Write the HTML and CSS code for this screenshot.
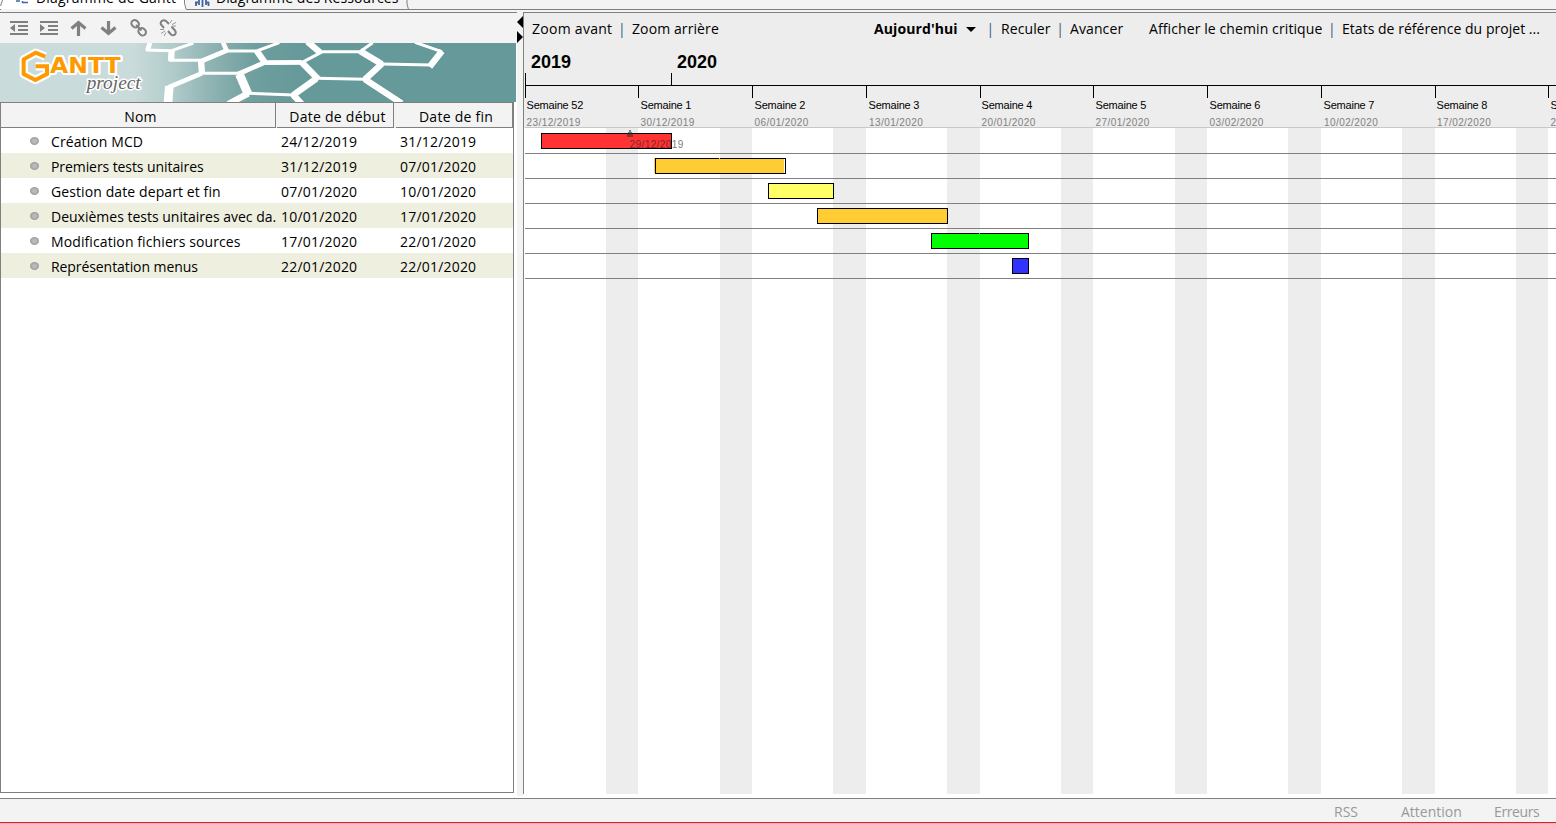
FILE: index.html
```html
<!DOCTYPE html>
<html lang="fr">
<head>
<meta charset="utf-8">
<title>GanttProject</title>
<link rel="stylesheet" href="styles.css">
</head>
<body>
<div class="app">
  <header class="tabs">
    <svg class="tab-lines" width="420" height="10" viewBox="0 0 420 10"><path d="M0 9.5H186L184.500 3V0M407 0V4L408.500 9.500" fill="none" stroke="#808080"/><path d="M1 9.500H186" stroke="#f3f3f3"/><path d="M.5 6L2.500 0" stroke="#808080"/><path d="M16 1H20M22 2.500H28M22.500 1V3" stroke="#4267a8" stroke-width="1.500"/><path d="M196 2V6M199 0V5M202.500 0V7M206 0V5M208.500 2V6M195 2.500H198M207 2.500H209" stroke="#4262a0" stroke-width="1.800"/></svg>
    <span class="tab tab-gantt">Diagramme de Gantt</span><span class="tab tab-res">Diagramme des Ressources</span>
  </header>
  <main class="main">
    <section class="left">
      <div class="tools">
        <svg viewBox="0 0 20 20"><path d="M1 4H19M9 8H19M9 12H19M1 16H19" stroke="#808080" stroke-width="2"/><path d="M6 6V14L1 10Z" fill="#808080"/></svg>
        <svg viewBox="0 0 20 20"><path d="M1 4H19M9 8H19M9 12H19M1 16H19" stroke="#808080" stroke-width="2"/><path d="M1 6V14L6 10Z" fill="#808080"/></svg>
        <svg viewBox="0 0 20 20"><path d="M2.500 10.500L9.500 4.500L16.500 10.500M9.500 4.500V18" fill="none" stroke="#808080" stroke-width="3.200"/></svg>
        <svg viewBox="0 0 20 20"><path d="M2.500 9.500L9.500 15.500L16.500 9.500M9.500 3V15.500" fill="none" stroke="#808080" stroke-width="3.200"/></svg>
        <svg viewBox="0 0 20 20"><g fill="none" stroke="#808080" stroke-width="2"><rect x="2" y="2.500" width="8" height="6.500" rx="3.200" transform="rotate(42 6 6)"/><rect x="9.200" y="10.500" width="8" height="6.500" rx="3.200" transform="rotate(42 13.200 13.700)"/><path d="M7 7L12.500 12.500"/></g></svg>
        <svg viewBox="0 0 20 20"><g fill="none" stroke="#808080" stroke-width="2"><path d="M5 10L2 6.500Q1 4.500 3 2.800Q5 1.500 7 3L10 6M9 13L12 16.500Q14 18 16 16.500Q17.500 14.500 16 12.500L12.500 8.500"/><path d="M11 5L13 2M13 6.500L17 4.500M13.500 8H17M1 11.500H5M2 15.500L6 13M5 18L7 14.500" stroke-width="1" stroke="#999"/></g></svg>
      </div>
      <svg class="banner" viewBox="0 129 1548 177" preserveAspectRatio="none">
        <defs><linearGradient id="sea" gradientUnits="userSpaceOnUse" x1="400" y1="0" x2="900" y2="0"><stop offset="0" stop-color="#c9dbda"/><stop offset=".24" stop-color="#b0cbca"/><stop offset=".48" stop-color="#8db2b1"/><stop offset=".72" stop-color="#6f9f9f"/><stop offset="1" stop-color="#669999"/></linearGradient></defs>
        <rect y="129" width="1548" height="177" fill="url(#sea)"/>
        <g fill="none" stroke="#fff" stroke-linejoin="bevel">
          <path stroke-width="9" d="M438 150L515 152L580 129M507 181H605L672 153H770L838 128M790 188H905L968 155H1080L1118 128M1145 192L1295 195L1325 155L1245 127M605 220H715L790 188M950 235L1095 238M745 280L880 285"/>
          <path stroke-width="14" d="M442 152L450 128M605 183L680 152L668 125M790 188L905 187M715 222L795 187M605 220L505 262"/>
          <path stroke-width="19" d="M515 150L513 183M603 182L606 222M770 152L796 190M960 157L922 125M905 187L955 238M1080 153L1145 192L1095 238L1205 310M950 235L880 285L905 312M745 280L685 312M1289 200L1326 153"/>
          <path stroke-width="26" d="M718 222L745 284M508 258L504 310"/>
        </g>
        <g stroke-linejoin="round">
          <path d="M136 170L107 158L71 178V222L106 240L141 222V199H107" fill="none" stroke="#fff" stroke-width="25"/>
          <text class="logo-main" x="150" y="220" textLength="212" lengthAdjust="spacingAndGlyphs">ANTT</text>
          <text class="logo-sub" x="260" y="266" textLength="162" lengthAdjust="spacingAndGlyphs">project</text>
          <path d="M136 170L107 158L71 178V222L106 240L141 222V199H107" fill="none" stroke="#ff9900" stroke-width="12" stroke-linejoin="miter"/>
        </g>
      </svg>
      <div class="table">
        <div class="row head"><span>Nom</span><span>Date de début</span><span>Date de fin</span></div>
        <div class="row"><span><i></i>Création MCD</span><span>24/12/2019</span><span>31/12/2019</span></div>
        <div class="row tight"><span><i></i>Premiers tests unitaires</span><span>31/12/2019</span><span>07/01/2020</span></div>
        <div class="row"><span><i></i>Gestion date depart et fin</span><span>07/01/2020</span><span>10/01/2020</span></div>
        <div class="row long"><span><i></i>Deuxièmes tests unitaires avec da.</span><span>10/01/2020</span><span>17/01/2020</span></div>
        <div class="row"><span><i></i>Modification fichiers sources</span><span>17/01/2020</span><span>22/01/2020</span></div>
        <div class="row tight"><span><i></i>Représentation menus</span><span>22/01/2020</span><span>22/01/2020</span></div>
      </div>
    </section>
    <div class="divider"><svg width="6" height="32" viewBox="0 0 6 32"><path d="M6 4V16L0 10ZM0 19V31L6 25Z"/></svg></div>
    <section class="right">
      <nav class="actions">
        <span class="w100">Zoom avant<b>|</b></span><span class="w242">Zoom arrière</span>
        <strong>Aujourd'hui</strong><svg width="10" height="5" viewBox="0 0 10 5"><path d="M0 0H10L5 5Z"/></svg>
        <b class="sep1">|</b><span class="w69">Reculer<b>|</b></span><span class="w79">Avancer</span><span class="w193">Afficher le chemin critique<b>|</b></span><span class="states">Etats de référence du projet ...</span>
      </nav>
      <svg class="chart" width="1032" height="751" viewBox="524 43 1032 751">
        <rect x="524" y="128" width="1032" height="666" fill="#fff"/>
        <g fill="#ededed"><path d="M606 128h32v666h-32zM720 128h32v666h-32zM833 128h33v666h-33zM947 128h33v666h-33zM1061 128h32v666h-32zM1175 128h32v666h-32zM1288 128h33v666h-33zM1402 128h33v666h-33zM1516 128h32v666h-32z"/></g>
        <path d="M525 127.500H1556" stroke="#c8c8c8"/>
        <path d="M525 153.500H1556M525 178.500H1556M525 203.500H1556M525 228.500H1556M525 253.500H1556M525 278.500H1556" stroke="#808080"/>
        <path d="M525 85.500H1556M525.500 73V98M671.500 73V85M638.500 85V98M752.500 85V98M866.500 85V98M980.500 85V98M1093.500 85V98M1207.500 85V98M1321.500 85V98M1435.500 85V98M1548.500 85V98" stroke="#000"/>
        <g class="year"><text x="531" y="68">2019</text><text x="677" y="68">2020</text></g>
        <g class="week"><text x="526.500" y="109">Semaine 52</text><text x="640.500" y="109">Semaine 1</text><text x="754.500" y="109">Semaine 2</text><text x="868.500" y="109">Semaine 3</text><text x="981.500" y="109">Semaine 4</text><text x="1095.500" y="109">Semaine 5</text><text x="1209.500" y="109">Semaine 6</text><text x="1323.500" y="109">Semaine 7</text><text x="1436.500" y="109">Semaine 8</text><text x="1550.500" y="109">Semaine 9</text></g>
        <g class="day"><text x="526.500" y="126">23/12/2019</text><text x="640.500" y="126">30/12/2019</text><text x="754.500" y="126">06/01/2020</text><text x="869" y="126">13/01/2020</text><text x="981.500" y="126">20/01/2020</text><text x="1095.500" y="126">27/01/2020</text><text x="1209.500" y="126">03/02/2020</text><text x="1324" y="126">10/02/2020</text><text x="1437" y="126">17/02/2020</text><text x="1550.500" y="126">24/02/2020</text></g>
        <g stroke="#000">
          <rect x="541.500" y="133.500" width="130" height="15" fill="#ff3333"/>
          <rect x="655.500" y="158.500" width="130" height="15" fill="#ffcc33"/>
          <rect x="768.500" y="183.500" width="65" height="15" fill="#ffff66"/>
          <rect x="817.500" y="208.500" width="130" height="15" fill="#ffcc33"/>
          <rect x="931.500" y="233.500" width="97" height="15" fill="#00ff00"/>
          <rect x="1012.500" y="258.500" width="16" height="15" fill="#3333ff"/>
        </g>
        <path d="M654.500 158V173M719.500 158V159" stroke="#ffcc33"/><path d="M784.500 159V173" stroke="#fff"/><path d="M979.500 233V234" stroke="#00ff00"/>
        <g opacity=".6"><path d="M627 137V134H628V132H629V130H631V132H632V134H633V137Z" fill="#333"/><text class="today" x="629.500" y="147.500">29/12/2019</text></g>
      </svg>
    </section>
  </main>
  <footer class="status"><span class="rss">RSS</span><span class="att">Attention</span><span class="err">Erreurs</span></footer>
  <div class="edge"></div>
</div>
</body>
</html>
```
FILE: styles.css
```css
* { box-sizing: border-box; }
body { margin: 0; background: #fff; color: #000; font: 14px/20px "Open Sans", "Noto Sans", sans-serif; overflow: hidden; white-space: nowrap; }
svg { display: block; flex: none; }
.app { width: 1556px; height: 824px; display: flex; flex-direction: column; overflow: hidden; }
.tabs { position: relative; height: 10px; flex: none; background: linear-gradient(90deg, #fff 186px, #f3f3f3 186px); border-bottom: 1px solid #808080; display: flex; }
.tab-lines { position: absolute; left: 0; top: 0; }
.tab { height: 20px; margin-top: -12px; letter-spacing: .08px; }
.tab-gantt { margin-left: 36px; width: 180px; letter-spacing: .2px; }
.main { height: 788px; flex: none; display: flex; padding-top: 2px; background: linear-gradient(#f3f3f3 4px, #fff 4px); }
.left { width: 517px; display: flex; flex-direction: column; background: #fff; }
.tools { height: 31px; flex: none; width: 517px; background: #f3f3f3; border-top: 1px solid #808080; display: flex; gap: 10px; padding: 5px 0 0 9px; }
.tools svg { width: 20px; height: 20px; }
.banner { width: 516px; height: 59px; }
.logo-main { font: bold 64px "DejaVu Sans", sans-serif; fill: #ff9900; stroke: #fff; stroke-width: 12px; paint-order: stroke; }
.logo-sub { font: italic 58px "Liberation Serif", serif; fill: #666; stroke: #fff; stroke-width: 9px; paint-order: stroke; }
.table { width: 514px; height: 691px; border: 1px solid #808080; }
.row { display: grid; grid-template-columns: 275px 119px 118px; grid-template-rows: 25px; height: 25px; line-height: 27px; }
.row:nth-child(odd) { background: #efefe0; }
.row span { padding-left: 5px; letter-spacing: .2px; }
.row span:first-child { padding-left: 29px; letter-spacing: .1px; }
.row.tight span:first-child { letter-spacing: -.08px; }
.row.long span:first-child { letter-spacing: 0; }
.row i { display: inline-block; width: 9px; height: 8px; margin: 0 12px 5px 0; border-radius: 50%; background: radial-gradient(#bbb 25%, #858585); vertical-align: middle; }
.row.head { background: #f3f3f3; }
.row.head span { border: 1px solid #808080; border-width: 0 1px 1px 0; padding: 0; text-align: center; margin-left: 1px; height: 25px; line-height: 27px; letter-spacing: .25px; }
.row.head span:first-child { margin-left: 0; padding-left: 5px; }
.row.head span:nth-child(2) { padding-left: 5px; margin-right: 1px; }
.row.head span:nth-child(3) { padding-left: 4px; }
.divider { width: 6px; height: 784px; background: #f3f3f3; }
.right { width: 1033px; height: 782px; border-left: 1px solid #808080; border-top: 1px solid #808080; background: #ededed; }
.actions { height: 30px; display: flex; align-items: center; padding: 2px 0 0 8px; }
.actions > * { flex: none; letter-spacing: .1px; }
.actions b { font-weight: 400; color: #36597c; margin-left: 5.5px; }
.actions .w100 { width: 100px; letter-spacing: .28px; }
.w242 { width: 242px; }
.actions strong { width: 92px; }
.actions .sep1 { margin-left: 10.5px; width: 14.5px; }
.w69 { width: 69px; }
.w79 { width: 79px; }
.w193 { width: 193px; }
.actions .states { letter-spacing: .03px; }
.year { font: bold 18px "Liberation Sans", sans-serif; }
.week { font: 11px "Liberation Sans", sans-serif; letter-spacing: -.2px; }
.day, .today { font: 10px "Liberation Sans", sans-serif; letter-spacing: .42px; fill: #808080; }
.today { fill: #222; }
.status { height: 24px; flex: none; background: #f3f3f3; border-top: 1px solid #808080; color: #999; display: flex; padding: 3px 0 0 1334px; }
.rss { width: 67px; }
.att { width: 93px; }
.err { letter-spacing: -.4px; }
.edge { height: 2px; background: linear-gradient(#ed1c24 1px, #e5b5b5 1px); }
```
